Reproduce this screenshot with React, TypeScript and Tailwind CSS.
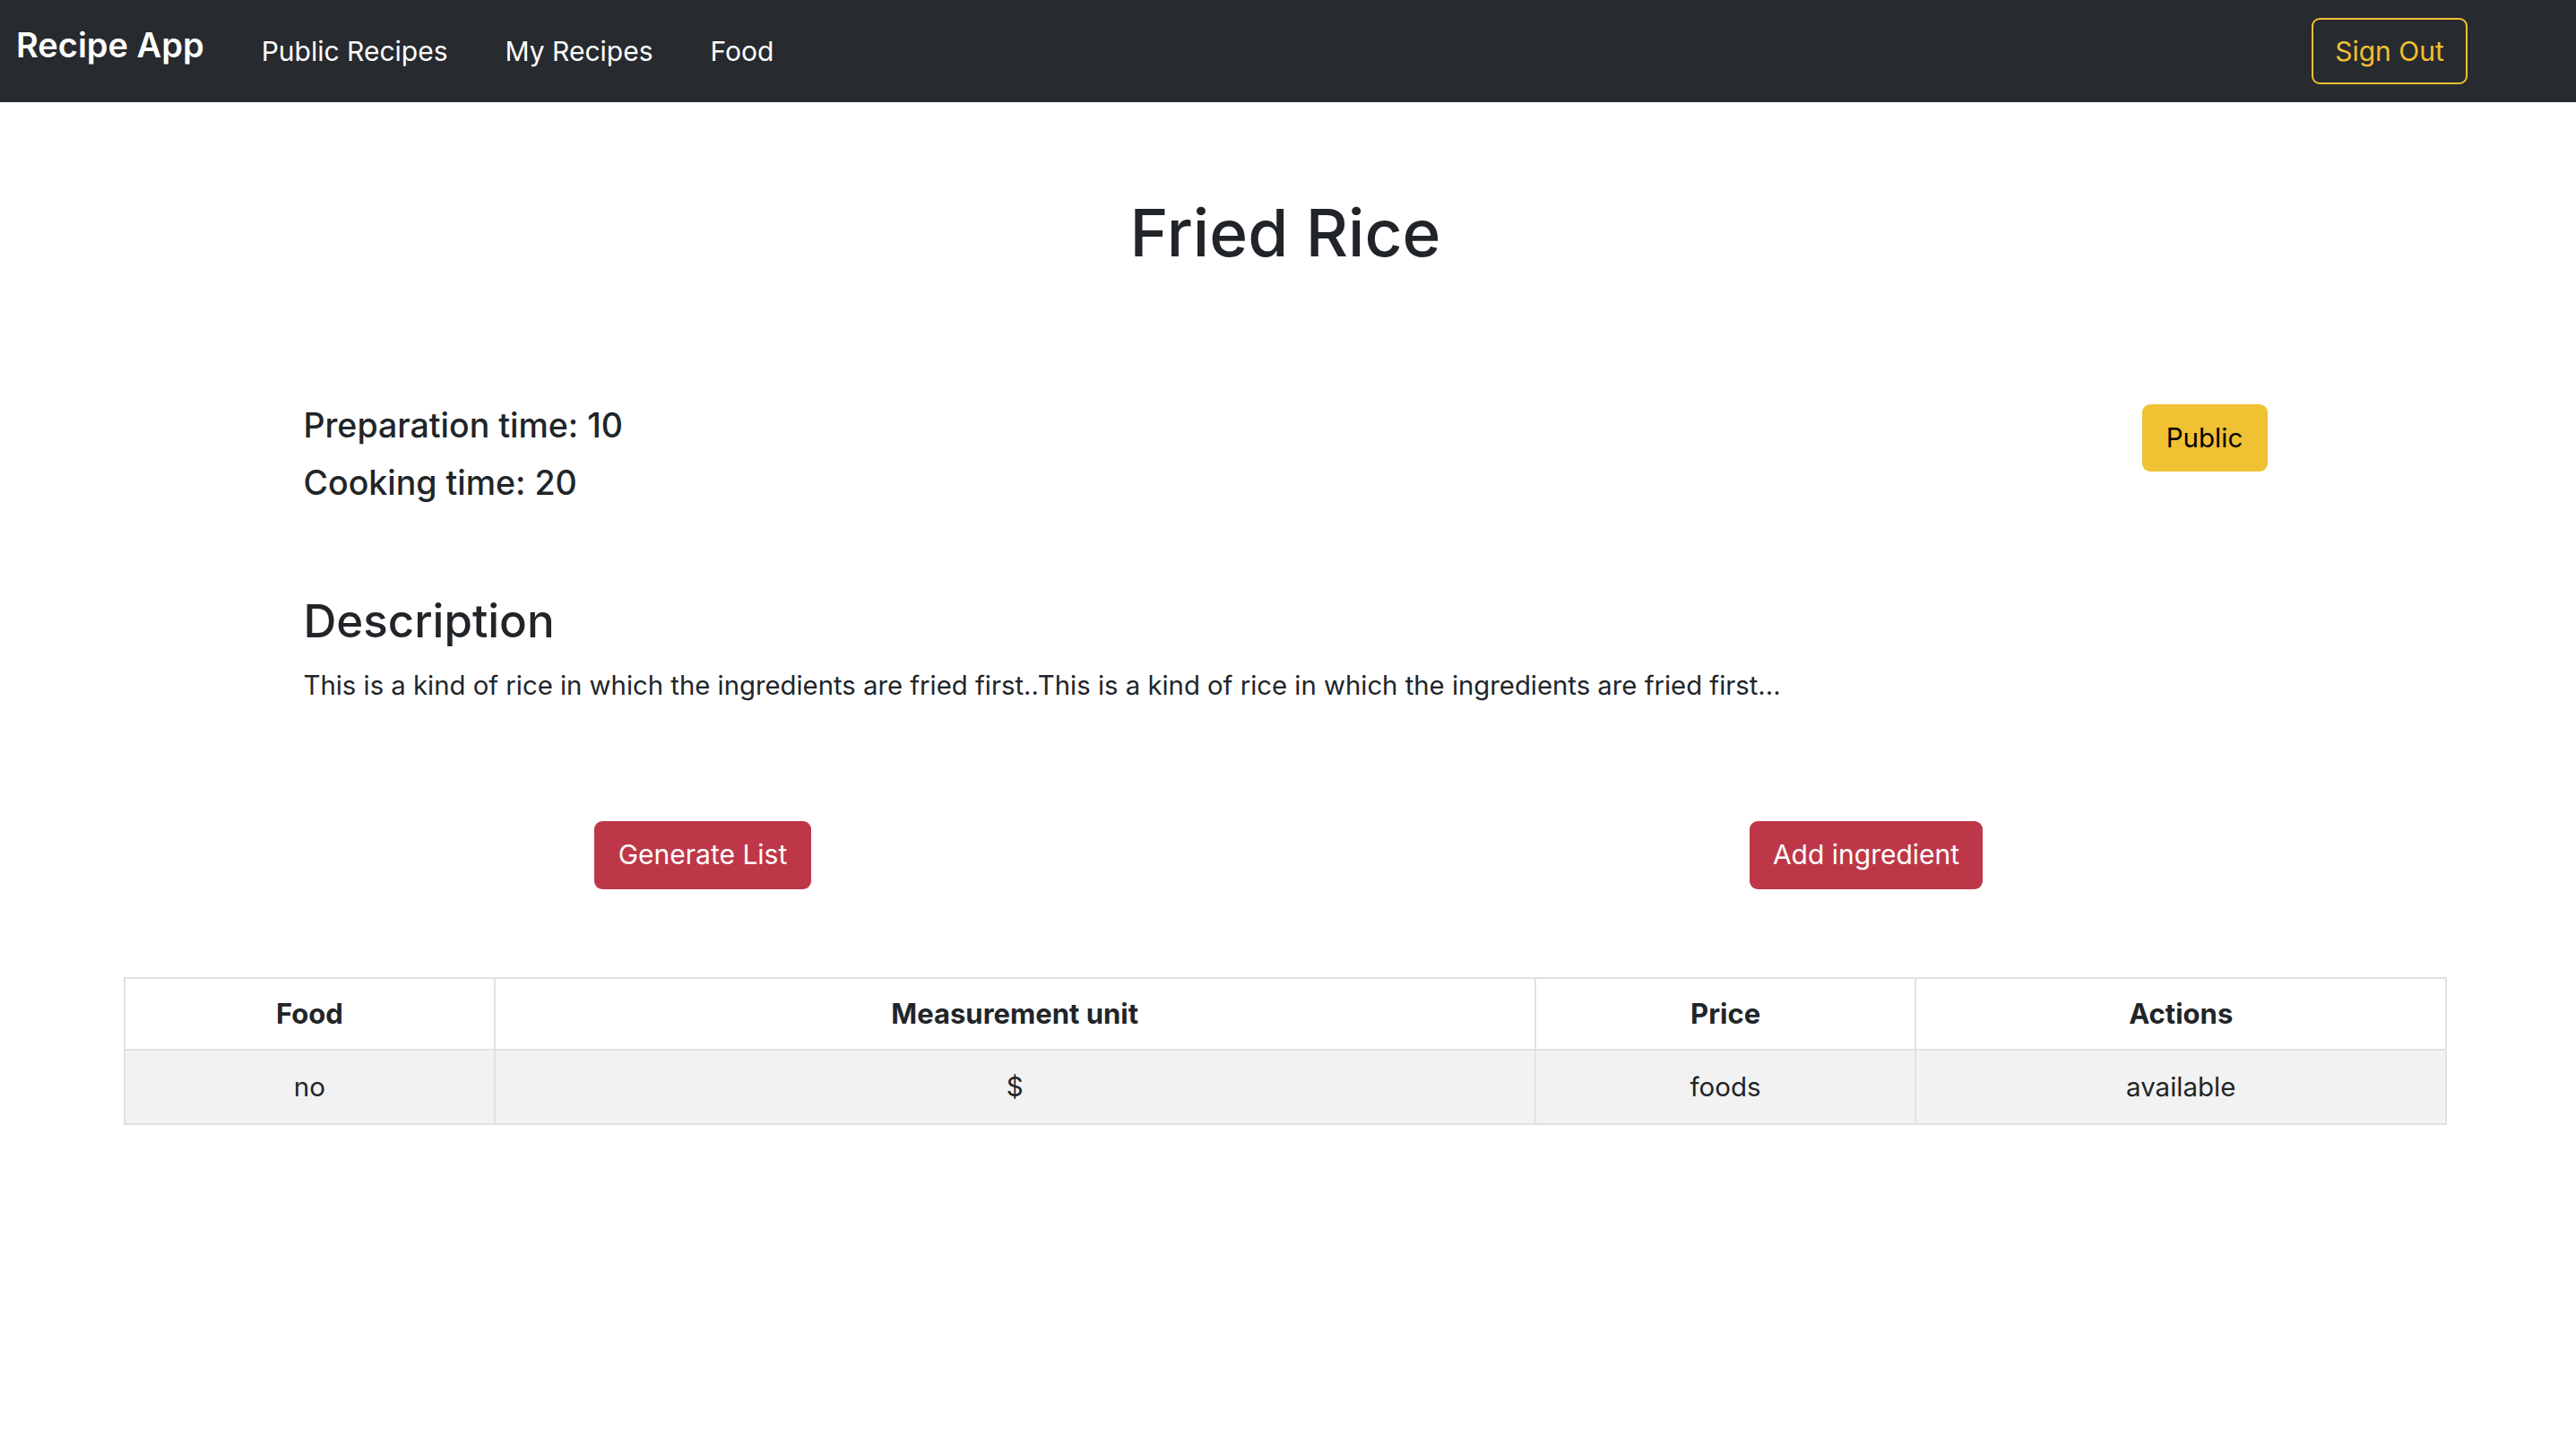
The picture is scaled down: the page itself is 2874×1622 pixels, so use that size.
const columns = [
  { label: "Food", width: "w-[413px]" },
  { label: "Measurement unit", width: "w-[1162px]" },
  { label: "Price", width: "w-[425px]" },
  { label: "Actions", width: "w-[592px]" },
];

const rows = [["no", "$", "foods", "available"]];

function Navbar() {
  return (
    <nav className="flex h-[114px] w-full items-center justify-between bg-[#272a2e] pl-[18px] pr-[121px]">
      <div className="flex items-center gap-[64px]">
        <a href="#" className="pb-[14px] text-[38px] font-semibold text-white">
          Recipe App
        </a>
        <a href="#" className="text-[30px] text-white">
          Public Recipes
        </a>
        <a href="#" className="text-[30px] text-white">
          My Recipes
        </a>
        <a href="#" className="text-[30px] text-white">
          Food
        </a>
      </div>
      <button
        type="button"
        className="flex h-[74px] w-[174px] items-center justify-center rounded-[9px] border-2 border-[#f0c132] text-[30px] text-[#f0c132]"
      >
        Sign Out
      </button>
    </nav>
  );
}

export default function App() {
  return (
    <div className="min-h-screen w-full bg-white font-['Inter',_'Liberation_Sans',_sans-serif] text-[#212529]">
      <Navbar />

      <main className="flex flex-col items-center pr-[6px]">
        <h1 className="mt-[102px] text-[73px] font-medium leading-[1.2]">
          Fried Rice
        </h1>

        <section className="mt-[139px] w-[2191px]">
          <div className="flex items-start justify-between">
            <div className="text-[37.5px] font-medium leading-[64px]">
              <p>Preparation time: 10</p>
              <p>Cooking time: 20</p>
            </div>
            <button
              type="button"
              className="mt-[8px] h-[75px] w-[140px] rounded-[9px] bg-[#f0c132] text-[29.5px] text-black"
            >
              Public
            </button>
          </div>

          <h3 className="mt-[91px] text-[51px] font-medium leading-[1.2]">
            Description
          </h3>
          <p className="mt-[20px] text-[29.3px] leading-[44px]">
            This is a kind of rice in which the ingredients are fried first..This is a kind of rice in which the ingredients are fried first...
          </p>
        </section>

        <div className="mt-[129px] grid w-[2592px] grid-cols-2">
          <div className="flex justify-center pr-[4px]">
            <button
              type="button"
              className="h-[76px] rounded-[9px] bg-[#be3748] px-[27px] text-[30px] text-white"
            >
              Generate List
            </button>
          </div>
          <div className="flex justify-center">
            <button
              type="button"
              className="h-[76px] rounded-[9px] bg-[#be3748] px-[26px] text-[30px] text-white"
            >
              Add ingredient
            </button>
          </div>
        </div>

        <table className="mt-[98px] w-[2592px] border-collapse text-center text-[29.5px]">
          <thead>
            <tr className="h-[80px] bg-white">
              {columns.map((c) => (
                <th
                  key={c.label}
                  className={`${c.width} border-2 border-[#dee2e6] text-[31px] font-bold`}
                >
                  {c.label}
                </th>
              ))}
            </tr>
          </thead>
          <tbody>
            {rows.map((r, i) => (
              <tr key={i} className="h-[83px] bg-[#f2f2f2]">
                {r.map((cell, j) => (
                  <td key={j} className="border-2 border-[#dee2e6]">
                    {cell}
                  </td>
                ))}
              </tr>
            ))}
          </tbody>
        </table>
      </main>
    </div>
  );
}
